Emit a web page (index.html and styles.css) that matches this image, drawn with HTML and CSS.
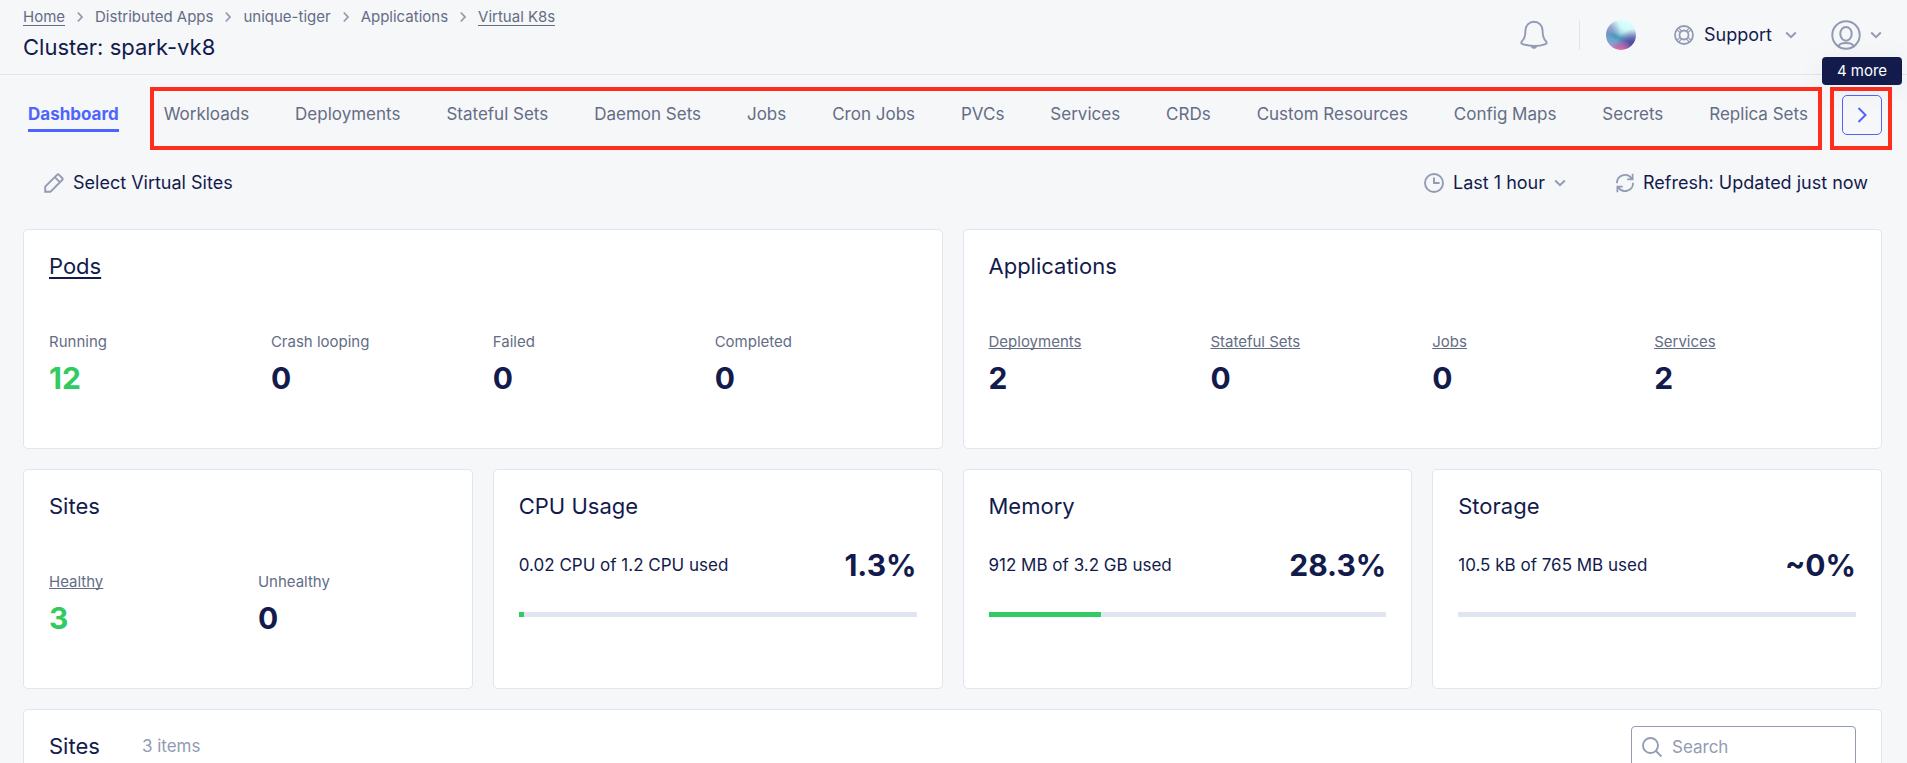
FILE: index.html
```html
<!DOCTYPE html>
<html lang="en">
<head>
<meta charset="utf-8">
<title>Cluster: spark-vk8</title>
<link rel="stylesheet" href="styles.css">
</head>
<body>
<svg class="sprite" aria-hidden="true">
  <symbol id="chevron-right" viewBox="0 0 6 12"><path d="M.8 1.500 5 6 .8 10.500" fill="none" stroke="currentColor" stroke-width="1.800"/></symbol>
  <symbol id="chevron-down" viewBox="0 0 12 8"><path d="M1.200 1.500 6 6.200l4.800-4.700" fill="none" stroke="currentColor" stroke-width="2"/></symbol>
</svg>
<div class="app">
  <header class="header">
    <div class="heading">
      <nav class="crumbs" aria-label="Breadcrumb">
        <a class="crumb crumb-link" href="#">Home</a>
        <svg class="crumb-sep"><use href="#chevron-right"/></svg>
        <span class="crumb">Distributed Apps</span>
        <svg class="crumb-sep"><use href="#chevron-right"/></svg>
        <span class="crumb">unique-tiger</span>
        <svg class="crumb-sep"><use href="#chevron-right"/></svg>
        <span class="crumb">Applications</span>
        <svg class="crumb-sep"><use href="#chevron-right"/></svg>
        <a class="crumb crumb-link" href="#">Virtual K8s</a>
      </nav>
      <h1 class="title">Cluster: spark-vk8</h1>
    </div>
    <div class="tools">
      <button class="bell" type="button" aria-label="Notifications">
        <svg width="28" height="30" viewBox="0 0 28 30" fill="none" stroke="currentColor" stroke-width="1.900"><path d="M14 1.800c-5 0-8.600 3.800-8.600 8.600 0 5.600-.8 8.200-3.100 10.400-1.300 1.300-1.600 2.600.2 3.300C5.500 25.200 9.500 26 14 26s8.500-.8 11.500-1.900c1.800-.7 1.500-2 .2-3.300-2.300-2.200-3.100-4.800-3.100-10.400 0-4.800-3.600-8.600-8.600-8.600Z"/><path d="M10.600 26.200h6.800c-.6 1.500-1.800 2.600-3.400 2.600s-2.800-1.100-3.400-2.600Z" fill="currentColor" stroke="none"/></svg>
      </button>
      <span class="orb"></span>
      <button class="support" type="button">
        <svg width="20" height="20" viewBox="0 0 20 20" fill="none" stroke="currentColor" stroke-width="1.800"><circle cx="10" cy="10" r="9"/><circle cx="10" cy="10" r="4.500"/><path d="m3.200 5 3 2.600M5 3.200l2.600 3M16.800 5l-3 2.600M15 3.200l-2.600 3M3.200 15l3-2.600M5 16.800l2.600-3M16.800 15l-3-2.600M15 16.800l-2.600-3" stroke-width="1.200"/></svg>
        <span>Support</span>
        <svg class="caret"><use href="#chevron-down"/></svg>
      </button>
      <button class="user" type="button" aria-label="Account">
        <svg width="30" height="30" viewBox="0 0 30 30" fill="none" stroke="currentColor" stroke-width="2"><circle cx="15" cy="15" r="13.700"/><ellipse cx="15" cy="13.800" rx="5.700" ry="6.900"/><path d="M7.500 26.300c.6-2.100 3.800-3.200 7.500-3.200s6.900 1.100 7.500 3.200"/></svg>
        <svg class="caret"><use href="#chevron-down"/></svg>
      </button>
    </div>
  </header>

  <nav class="tabs" aria-label="Cluster sections">
    <a class="tab tab-active" href="#">Dashboard</a>
    <div class="tab-group">
      <a class="tab" href="#">Workloads</a>
      <a class="tab" href="#">Deployments</a>
      <a class="tab" href="#">Stateful Sets</a>
      <a class="tab" href="#">Daemon Sets</a>
      <a class="tab" href="#">Jobs</a>
      <a class="tab" href="#">Cron Jobs</a>
      <a class="tab" href="#">PVCs</a>
      <a class="tab" href="#">Services</a>
      <a class="tab" href="#">CRDs</a>
      <a class="tab" href="#">Custom Resources</a>
      <a class="tab" href="#">Config Maps</a>
      <a class="tab" href="#">Secrets</a>
      <a class="tab" href="#">Replica Sets</a>
    </div>
    <div class="more">
      <button class="more-button" type="button" aria-label="More tabs" aria-describedby="more-tip">
        <svg width="10" height="16" viewBox="0 0 10 16" fill="none" stroke="currentColor" stroke-width="2"><path d="m1.500 1 7 7-7 7"/></svg>
      </button>
      <span class="tooltip" id="more-tip" role="tooltip">4 more</span>
    </div>
  </nav>

  <main class="main">
    <div class="toolbar">
      <button class="action" type="button">
        <svg width="20" height="20" viewBox="0 0 20 20" fill="none" stroke="currentColor" stroke-width="1.900"><path d="M1.200 18.800v-5.200L13 1.800q1-1 2 0L18.200 5q1 1 0 2L6.400 18.800ZM10.800 4.200l5 5"/></svg>
        <span>Select Virtual Sites</span>
      </button>
      <div class="toolbar-right">
        <button class="action" type="button">
          <svg width="20" height="20" viewBox="0 0 20 20" fill="none" stroke="currentColor" stroke-width="1.900"><circle cx="10" cy="10" r="9"/><path d="M10 4.400V10h5.600"/></svg>
          <span>Last 1 hour</span>
          <svg class="caret"><use href="#chevron-down"/></svg>
        </button>
        <button class="action" type="button">
          <svg width="18" height="20" viewBox="0 0 18 20" fill="none" stroke="currentColor" stroke-width="1.800"><path d="M1 10.200A8 8 0 0 1 15.600 5.400M16.600.8v5.600h-5.400M17 9.800A8 8 0 0 1 2.400 14.600M1.400 19.200v-5.600h5.400"/></svg>
          <span>Refresh: Updated just now</span>
        </button>
      </div>
    </div>

    <div class="grid">
      <section class="card card-wide">
        <h2 class="card-title"><a class="card-title-link" href="#">Pods</a></h2>
        <div class="stats stats-4">
          <div class="stat"><span class="label">Running</span><strong class="number good">12</strong></div>
          <div class="stat"><span class="label">Crash looping</span><strong class="number">0</strong></div>
          <div class="stat"><span class="label">Failed</span><strong class="number">0</strong></div>
          <div class="stat"><span class="label">Completed</span><strong class="number">0</strong></div>
        </div>
      </section>
      <section class="card card-wide">
        <h2 class="card-title">Applications</h2>
        <div class="stats stats-4">
          <div class="stat"><a class="label" href="#">Deployments</a><strong class="number">2</strong></div>
          <div class="stat"><a class="label" href="#">Stateful Sets</a><strong class="number">0</strong></div>
          <div class="stat"><a class="label" href="#">Jobs</a><strong class="number">0</strong></div>
          <div class="stat"><a class="label" href="#">Services</a><strong class="number">2</strong></div>
        </div>
      </section>
      <section class="card">
        <h2 class="card-title">Sites</h2>
        <div class="stats stats-2">
          <div class="stat"><a class="label" href="#">Healthy</a><strong class="number good">3</strong></div>
          <div class="stat"><span class="label">Unhealthy</span><strong class="number">0</strong></div>
        </div>
      </section>
      <section class="card">
        <h2 class="card-title">CPU Usage</h2>
        <div class="usage"><span>0.02 CPU of 1.2 CPU used</span><strong class="number">1.3%</strong></div>
        <div class="bar"><div class="bar-fill" style="width: 1.3%"></div></div>
      </section>
      <section class="card">
        <h2 class="card-title">Memory</h2>
        <div class="usage"><span>912 MB of 3.2 GB used</span><strong class="number">28.3%</strong></div>
        <div class="bar"><div class="bar-fill" style="width: 28.3%"></div></div>
      </section>
      <section class="card">
        <h2 class="card-title">Storage</h2>
        <div class="usage"><span>10.5 kB of 765 MB used</span><strong class="number">~0%</strong></div>
        <div class="bar"><div class="bar-fill" style="width: 0%"></div></div>
      </section>
      <section class="card card-full">
        <h2 class="card-title">Sites</h2>
        <span class="count">3 items</span>
        <label class="search">
          <svg width="20" height="20" viewBox="0 0 20 20" fill="none" stroke="currentColor" stroke-width="1.900"><circle cx="8.500" cy="8.500" r="7.500"/><path d="m14 14 5.500 5.500"/></svg>
          <input class="search-input" type="text" placeholder="Search" aria-label="Search">
        </label>
      </section>
    </div>
  </main>
</div>
</body>
</html>
```
FILE: styles.css
```css
* { box-sizing: border-box; }

body {
  margin: 0;
  background: #f6f7f9;
  color: #131b4d;
  font-family: Inter, "Liberation Sans", sans-serif;
  font-size: 17px;
  line-height: 22px;
}

a { color: inherit; }

button {
  padding: 0;
  border: 0;
  background: none;
  color: inherit;
  font: inherit;
  cursor: pointer;
}

svg { flex: none; display: block; color: #929bb3; }

.sprite { position: absolute; width: 0; height: 0; }

.app { height: 100vh; overflow: hidden; }

.caret { width: 12px; height: 8px; }

/* Header */
.header {
  display: flex;
  justify-content: space-between;
  align-items: flex-start;
  height: 75px;
  padding: 8px 25px 0 23px;
  border-bottom: 1px solid #e1e5f1;
}

.crumbs { display: flex; align-items: flex-start; gap: 12px; color: #646d85; font-size: 15px; line-height: 17px; }
.crumb-link { border-bottom: 1px solid #646d85; text-decoration: none; }
.crumb-sep { width: 6px; height: 12px; margin-top: 3px; }
.title { margin: 7px 0 0; font-size: 22px; line-height: 28px; font-weight: 400; }

.tools { display: flex; align-items: center; padding-top: 12px; }
.bell { padding-right: 31px; border-right: 1px solid #e1e5f1; }
.orb {
  width: 30px;
  height: 30px;
  margin: 0 38px 0 26px;
  border-radius: 50%;
  background:
    radial-gradient(circle at 50% 104%, #f06a9c 0, rgba(205, 92, 160, .7) 16%, transparent 34%),
    radial-gradient(circle at 90% 84%, #5b3f9c 0, rgba(91, 63, 156, .6) 22%, transparent 44%),
    radial-gradient(circle at 10% 30%, rgba(150, 150, 205, .8) 0, transparent 34%),
    radial-gradient(circle at 74% 12%, #d4fffb 0, rgba(212, 255, 251, .7) 25%, transparent 52%),
    linear-gradient(200deg, #ecffff 12%, #c4e4ee 30%, #3d93b8 56%, #62a8c8 68%, #a79ad6 90%);
}
.support { display: flex; align-items: center; font-size: 18px; }
.support span { margin: 0 13px 0 10px; }
.user { display: flex; align-items: center; gap: 9px; margin-left: 34px; }

/* Tabs */
.tabs { display: flex; align-items: flex-start; padding: 12px 15px 0 28px; color: #646d85; }
.tab { text-decoration: none; white-space: nowrap; }
.tab-active {
  margin: 16px 31px 0 0;
  padding-bottom: 4px;
  border-bottom: 3px solid #4f64ff;
  color: #4f64ff;
  font-weight: 700;
}
.tab-group {
  display: flex;
  flex: 1;
  justify-content: space-between;
  height: 63px;
  padding: 12px 10px;
  border: 4px solid #ff2d1d;
}
.more { position: relative; height: 63px; margin-left: 8px; padding: 4px 6px 0 8px; border: 4px solid #ff2d1d; }
.more-button {
  display: flex;
  align-items: center;
  justify-content: center;
  width: 40px;
  height: 40px;
  border: 1px solid #4f64ff;
  border-radius: 5px;
}
.more-button svg { color: #4f64ff; }
.tooltip {
  position: absolute;
  right: -14px;
  bottom: 61px;
  width: 80px;
  border-radius: 4px;
  background: #131b4d;
  box-shadow: 0 4px 30px rgba(19, 27, 77, .06);
  color: #fff;
  font-size: 15px;
  line-height: 28px;
  text-align: center;
}

/* Toolbar */
.main { padding: 0 25px 20px 23px; }
.toolbar { display: flex; justify-content: space-between; align-items: center; height: 79px; padding: 0 14px 14px 21px; font-size: 18px; }
.toolbar-right { display: flex; gap: 50px; }
.action { display: flex; align-items: center; gap: 9px; }

/* Cards */
.grid { display: grid; grid-template-columns: repeat(4, 1fr); gap: 20px; }
.card { min-height: 220px; padding: 22px 25px; border: 1px solid #e1e5ee; border-radius: 5px; background: #fff; }
.card-wide { grid-column: span 2; }
.card-full { grid-column: span 4; display: flex; align-items: flex-start; padding-top: 16px; }
.card-title { margin: 0; font-size: 22px; line-height: 28px; font-weight: 400; }
.card-title-link { text-decoration: underline; text-decoration-thickness: 2px; text-underline-offset: 3px; text-decoration-skip-ink: none; }

.stats { display: grid; gap: 20px; margin-top: 53px; }
.stats-4 { grid-template-columns: repeat(4, 1fr); }
.stats-2 { grid-template-columns: repeat(2, 1fr); }
.stat { display: flex; flex-direction: column; align-items: flex-start; gap: 9px; }
.label { color: #646d85; font-size: 15px; line-height: 18px; text-decoration-skip-ink: none; }
.number { font-size: 30px; line-height: 36px; font-weight: 700; }
.good { color: #31cb62; }

.usage { display: flex; justify-content: space-between; align-items: center; margin-top: 27px; }
.bar { height: 5px; margin-top: 29px; background: #e1e5f1; }
.bar-fill { height: 5px; background: #31cb62; }

.card-full .card-title { padding-top: 6px; }
.count { margin: 9px auto 0 42px; color: #929bb3; }
.search { display: flex; align-items: center; gap: 10px; width: 225px; height: 42px; padding: 0 10px; border: 1px solid #929bb3; border-radius: 4px; }
.search-input { flex: 1; min-width: 0; padding: 0; border: 0; outline: 0; background: none; color: #131b4d; font: inherit; }
.search-input::placeholder { color: #929bb3; opacity: 1; }
```
